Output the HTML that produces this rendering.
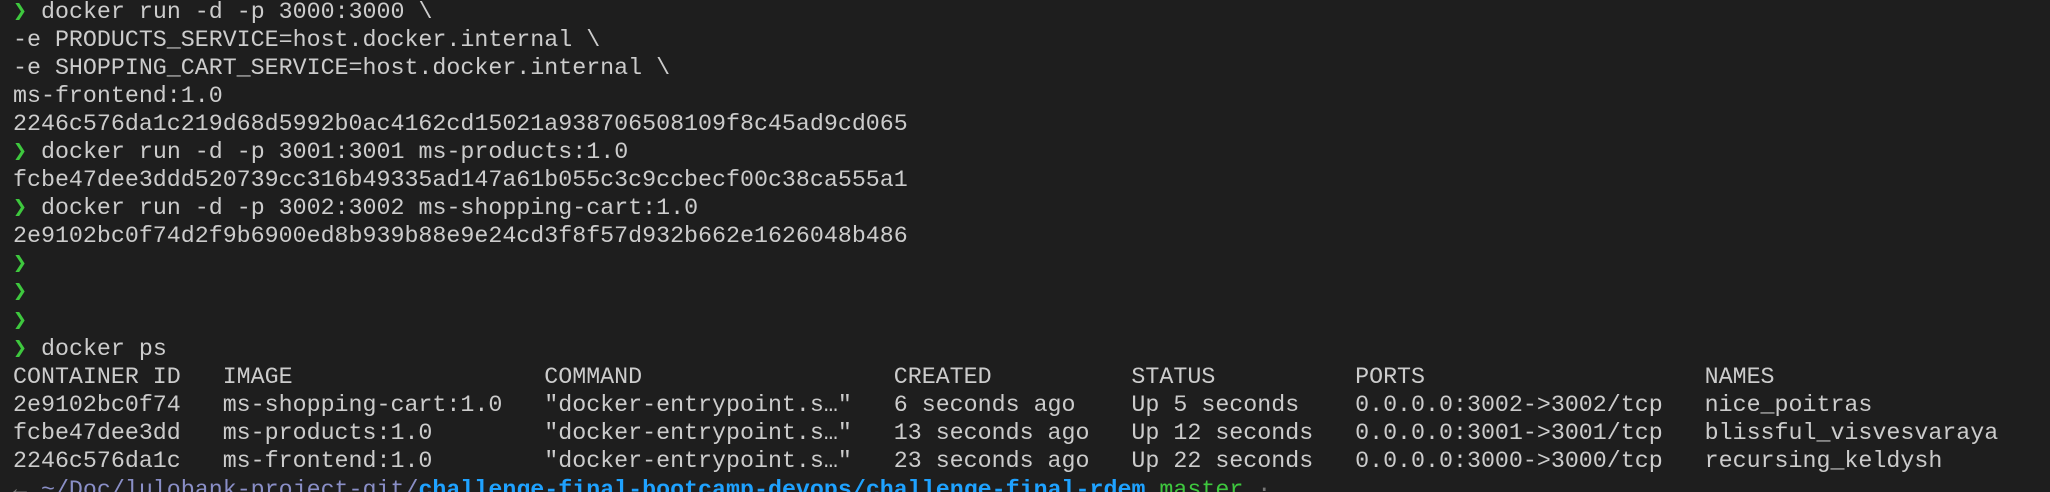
<!DOCTYPE html>
<html><head><meta charset="utf-8"><style>
html,body{margin:0;padding:0;background:#1e1e1e;width:2050px;height:492px;overflow:hidden;position:relative}
pre{margin:0;position:absolute;left:13px;top:-2px;font-family:"Liberation Mono","DejaVu Sans Mono",monospace;font-size:23.3px;line-height:28.05px;color:#cccccc;white-space:pre}
.g{color:#3ec83e}
.p{color:#8a8fc7}
.b{color:#1fa2ff;font-weight:bold}
.m{color:#3ec83e}
.d{color:#777}
</style></head><body><pre><span class="g">❯</span> docker run -d -p 3000:3000 \
-e PRODUCTS_SERVICE=host.docker.internal \
-e SHOPPING_CART_SERVICE=host.docker.internal \
ms-frontend:1.0
2246c576da1c219d68d5992b0ac4162cd15021a938706508109f8c45ad9cd065
<span class="g">❯</span> docker run -d -p 3001:3001 ms-products:1.0
fcbe47dee3ddd520739cc316b49335ad147a61b055c3c9ccbecf00c38ca555a1
<span class="g">❯</span> docker run -d -p 3002:3002 ms-shopping-cart:1.0
2e9102bc0f74d2f9b6900ed8b939b88e9e24cd3f8f57d932b662e1626048b486
<span class="g">❯</span>
<span class="g">❯</span>
<span class="g">❯</span>
<span class="g">❯</span> docker ps
CONTAINER ID   IMAGE                  COMMAND                  CREATED          STATUS          PORTS                    NAMES
2e9102bc0f74   ms-shopping-cart:1.0   "docker-entrypoint.s…"   6 seconds ago    Up 5 seconds    0.0.0.0:3002->3002/tcp   nice_poitras
fcbe47dee3dd   ms-products:1.0        "docker-entrypoint.s…"   13 seconds ago   Up 12 seconds   0.0.0.0:3001->3001/tcp   blissful_visvesvaraya
2246c576da1c   ms-frontend:1.0        "docker-entrypoint.s…"   23 seconds ago   Up 22 seconds   0.0.0.0:3000->3000/tcp   recursing_keldysh</pre>
<pre style="top:476px"><span class="d">←</span> <span class="p">~/Doc/lulobank-project-git/</span><span class="b">challenge-final-bootcamp-devops/challenge-final-rdem</span> <span class="m">master</span> <span class="d">·</span></pre></body></html>
